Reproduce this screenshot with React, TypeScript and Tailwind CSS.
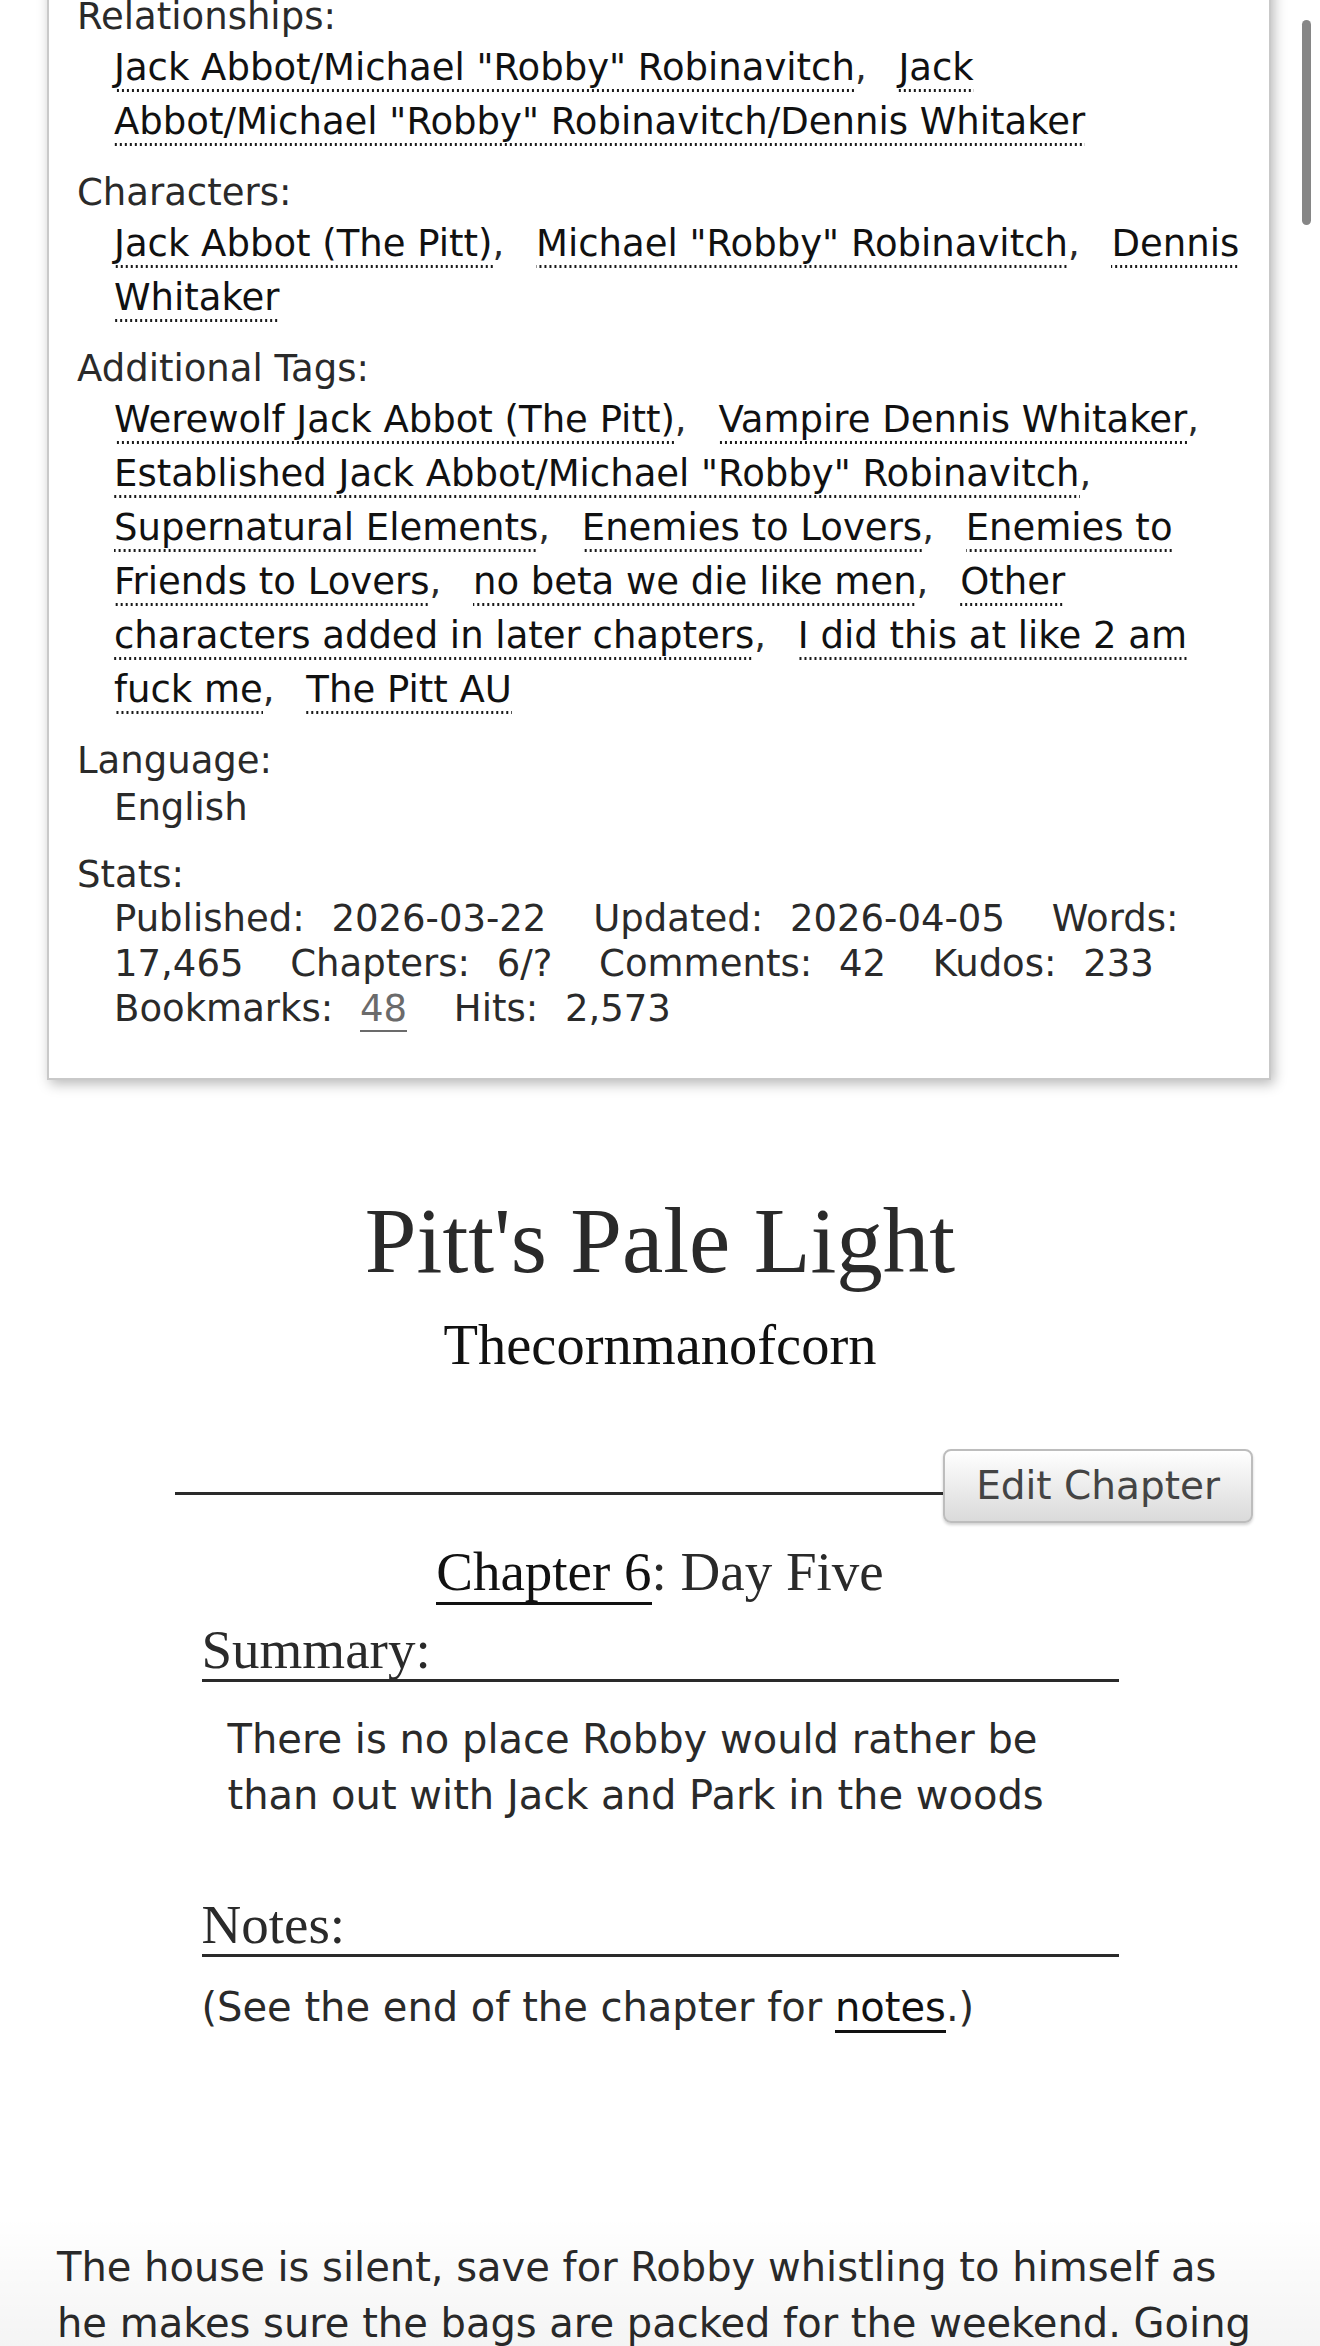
import type { ReactNode } from 'react';

const RELATIONSHIPS = [
  'Jack Abbot/Michael "Robby" Robinavitch',
  'Jack Abbot/Michael "Robby" Robinavitch/Dennis Whitaker',
];

const CHARACTERS = ['Jack Abbot (The Pitt)', 'Michael "Robby" Robinavitch', 'Dennis Whitaker'];

const TAGS = [
  'Werewolf Jack Abbot (The Pitt)',
  'Vampire Dennis Whitaker',
  'Established Jack Abbot/Michael "Robby" Robinavitch',
  'Supernatural Elements',
  'Enemies to Lovers',
  'Enemies to Friends to Lovers',
  'no beta we die like men',
  'Other characters added in later chapters',
  'I did this at like 2 am fuck me',
  'The Pitt AU',
];

const STATS: [string, ReactNode][] = [
  ['Published', '2026-03-22'],
  ['Updated', '2026-04-05'],
  ['Words', '17,465'],
  ['Chapters', '6/?'],
  ['Comments', '42'],
  ['Kudos', '233'],
  [
    'Bookmarks',
    <a href="#" className="border-b-2 border-[#6b6b6b] text-[#6b6b6b]">
      48
    </a>,
  ],
  ['Hits', '2,573'],
];

function Label({ children, first }: { children: ReactNode; first?: boolean }) {
  return <dt className={`leading-[49px] ${first ? '' : 'mt-[19px]'}`}>{children}</dt>;
}

// dotted underline drawn as a repeating strip under the link text
function TagList({ tags }: { tags: string[] }) {
  return (
    <dd className="ml-[37px] leading-[54px]">
      {tags.map((tag, i) => (
        <span key={tag}>
          <a
            href="#"
            className="bg-[linear-gradient(to_right,#1a1a1a_50%,transparent_50%)] bg-[length:5px_2.5px] bg-bottom bg-repeat-x pb-[2.5px] text-[#111]"
          >
            {tag}
          </a>
          {i < tags.length - 1 && <span className="mr-[20px]">,</span>}{' '}
        </span>
      ))}
    </dd>
  );
}

function WorkMeta() {
  return (
    <dl className="mt-[-36px] ml-[47px] mr-[49px] border-2 border-[#c9c9c9] bg-white pt-[26px] pb-[47px] pl-[28px] pr-[21px] text-[37px] shadow-[3px_4px_12px_rgba(0,0,0,0.28)]">
      <Label first>Relationships:</Label>
      <TagList tags={RELATIONSHIPS} />

      <Label>Characters:</Label>
      <TagList tags={CHARACTERS} />

      <Label>Additional Tags:</Label>
      <TagList tags={TAGS} />

      <Label>Language:</Label>
      <dd className="ml-[37px] leading-[46px]">English</dd>

      <Label>Stats:</Label>
      <dd className="mt-[-3px] ml-[37px] leading-[45px]">
        {STATS.map(([key, value], i) => (
          <span key={key}>
            <span className="mr-[15px]">{key}:</span>{' '}
            <span className={i < STATS.length - 1 ? 'mr-[35px]' : ''}>{value}</span>{' '}
          </span>
        ))}
      </dd>
    </dl>
  );
}

function SectionHeading({ children }: { children: ReactNode }) {
  return (
    <h3 className="border-b-[3px] border-[#2a2a2a] font-['Liberation_Serif',serif] text-[55px] leading-[58px]">
      {children}
    </h3>
  );
}

export default function App() {
  return (
    <div className="relative h-[2346px] overflow-hidden bg-white font-['DejaVu_Sans',sans-serif] text-[#2a2a2a]">
      <WorkMeta />

      {/* Preface */}
      <div className="mt-[106px] text-center font-['Liberation_Serif',serif]">
        <h2 className="text-[93px] leading-[110px]">Pitt's Pale Light</h2>
        <h3 className="mt-[16px] text-[56.5px] leading-[66px]">
          <a href="#" className="text-[#111]">
            Thecornmanofcorn
          </a>
        </h3>
      </div>

      {/* Chapter actions row */}
      <div className="mt-[71px] ml-[175px] mr-[67px] flex items-start">
        <div className="mt-[43px] h-[3px] flex-1 bg-[#2a2a2a]" />
        <button className="h-[74px] rounded-[8px] border-2 border-[#bdbdbd] bg-[linear-gradient(to_bottom,#ffffff,#dadada)] px-[31px] text-[39px] leading-[70px] text-[#444] shadow-[0_2px_3px_rgba(0,0,0,0.18)]">
          Edit Chapter
        </button>
      </div>

      <h3 className="mt-[16px] text-center font-['Liberation_Serif',serif] text-[55px] leading-[66px]">
        <a href="#" className="border-b-[3px] border-[#111] text-[#111]">
          Chapter 6
        </a>
        : Day Five
      </h3>

      <div className="mx-auto mt-[16px] w-[917px] text-[40px]">
        <SectionHeading>Summary:</SectionHeading>
        <blockquote className="mx-[26px] mt-[29px] leading-[56px]">
          There is no place Robby would rather be than out with Jack and Park in the woods
        </blockquote>

        <div className="mt-[73px]">
          <SectionHeading>Notes:</SectionHeading>
        </div>
        <p className="mt-[22px] leading-[56px]">
          (See the end of the chapter for{' '}
          <a href="#" className="border-b-[3px] border-[#111] text-[#111]">
            notes
          </a>
          .)
        </p>
      </div>

      <div className="mt-[204px] pl-[57px] pr-[55px] text-[40px] leading-[56px]">
        <p>
          The house is silent, save for Robby whistling to himself as he makes sure the bags are packed
          for the weekend. Going out to the woods always puts him in a good mood.
        </p>
      </div>

      {/* Scroll indicator */}
      <div className="absolute right-[9px] top-[20px] h-[205px] w-[9px] rounded-full bg-[#868686]" />

      {/* Bottom toolbar fade */}
      <div className="pointer-events-none absolute bottom-0 left-0 right-0 h-[130px] bg-[linear-gradient(to_bottom,rgba(0,0,0,0),rgba(0,0,0,0.045))]" />
    </div>
  );
}
